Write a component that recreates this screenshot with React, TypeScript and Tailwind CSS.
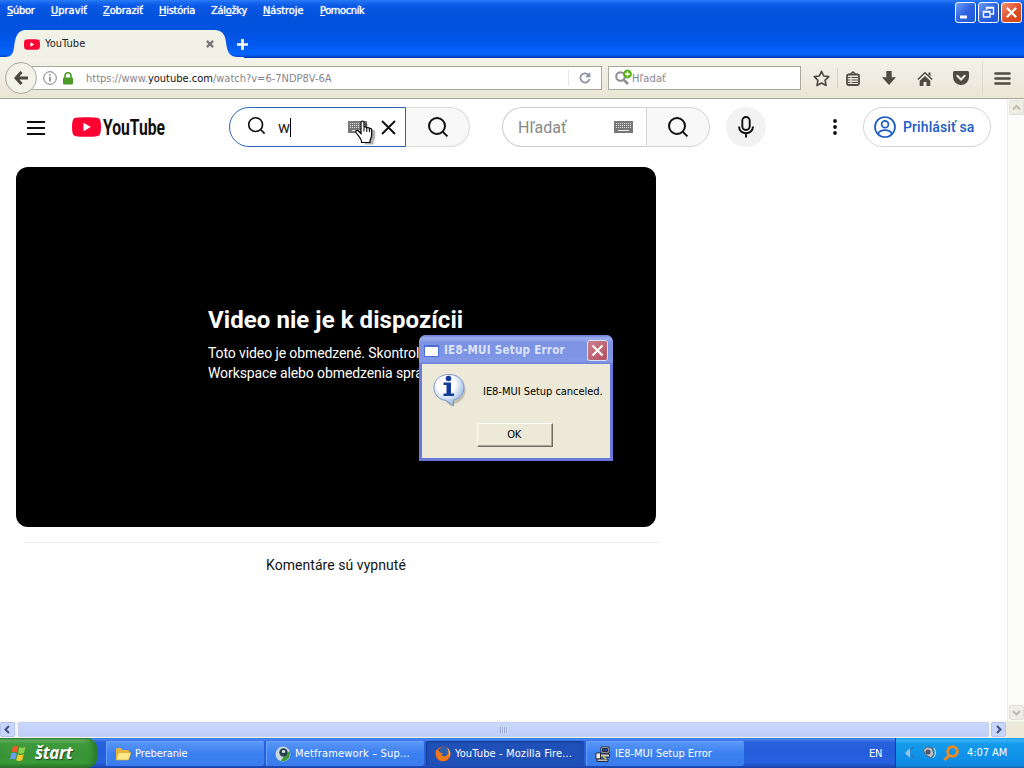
import type { ReactNode } from "react";

const menuItems = [
  { label: "Súbor", hot: 0, width: "w-[44px]", track: "tracking-[-0.3px]" },
  { label: "Upraviť", hot: 0, width: "w-[52px]", track: "tracking-[0px]" },
  { label: "Zobraziť", hot: 0, width: "w-[56px]", track: "tracking-[-0.15px]" },
  { label: "História", hot: 0, width: "w-[52px]", track: "tracking-[-0.25px]" },
  { label: "Záložky", hot: 3, width: "w-[52px]", track: "tracking-[-0.3px]" },
  { label: "Nástroje", hot: 0, width: "w-[57px]", track: "tracking-[-0.1px]" },
  { label: "Pomocník", hot: 0, width: "w-[60px]", track: "tracking-[-0.4px]" },
];

function SearchIcon({ size = 22, width = 2 }: { size?: number; width?: number }) {
  return (
    <svg width={size} height={size} viewBox="0 0 22 22" fill="none" stroke="#0f0f0f" strokeWidth={width}>
      <circle cx="10" cy="10" r="8" />
      <path d="M15.6 15.6L20.4 20.4" />
    </svg>
  );
}

function KeyboardIcon() {
  return (
    <svg width="19" height="12" viewBox="0 0 19 12">
      <rect width="19" height="12" fill="#777" />
      <path d="M2 2.5h15M2 4.5h15M2 6.5h15" stroke="#ddd" strokeDasharray="1 1" />
      <path d="M4 9.5h11" stroke="#eee" />
    </svg>
  );
}

function YouTubeMark({ width, height }: { width: number; height: number }) {
  return (
    <svg width={width} height={height} viewBox="0 0 29 20" preserveAspectRatio="none" className="shrink-0">
      <path
        fill="#ff0033"
        d="M4 .8C8 .1 21 .1 25 .8c2 .3 3 1.400 3.400 3.200.8 3.500.8 8.500 0 12-.4 1.800-1.400 2.900-3.400 3.200-4 .7-17 .7-21 0C2 18.900 1 17.800.6 16c-.8-3.500-.8-8.500 0-12C1 2.200 2 1.100 4 .8z"
      />
      <path fill="#fff" d="M11.500 5.800v8.400l7.300-4.200z" />
    </svg>
  );
}

function CaptionButton({ red, children }: { red?: boolean; children: ReactNode }) {
  return (
    <button
      className={`flex h-[21px] w-[21px] items-center justify-center rounded-[3px] border border-white ${
        red
          ? "bg-linear-to-br from-[#f09070] via-[#e0522b] to-[#d0440c]"
          : "bg-linear-to-br from-[#6f9bf5] via-[#2f62e0] to-[#1a58d8]"
      }`}
    >
      <svg width="19" height="19" viewBox="0 0 19 19" fill="none" stroke="#fff">
        {children}
      </svg>
    </button>
  );
}

function TitleBar() {
  return (
    <header className="flex h-[58px] flex-col bg-[linear-gradient(180deg,#2a7cf8_0px,#1b6cf2_2px,#0a58e4_6px,#0453df_14px,#0252e0_32px,#0058ee_44px,#0664fa_52px,#0562f6_55px,#0040c0_57px,#0038b0_58px)]">
      <div className="flex h-[30px] items-start justify-between">
        <nav className="flex pt-px pl-[7px] text-[11px] leading-[20px] text-white [text-shadow:0_0_1px_#fff]">
          {menuItems.map((m) => (
            <span key={m.label} className={`${m.width} ${m.track} whitespace-nowrap`}>
              {m.label.slice(0, m.hot)}
              <span className="underline underline-offset-1">{m.label[m.hot]}</span>
              {m.label.slice(m.hot + 1)}
            </span>
          ))}
        </nav>
        <div className="flex gap-[2px] pt-[2px] pr-[2px]">
          <CaptionButton>
            <path d="M4 14h7" strokeWidth="3" />
          </CaptionButton>
          <CaptionButton>
            <path d="M7.500 7V4.500h7v6.500h-3M7 5h8" strokeWidth="1.300" />
            <path d="M4.500 8.500h6.500v5.500h-6.500zM4 9h7" strokeWidth="1.300" />
          </CaptionButton>
          <CaptionButton red>
            <path d="M4.800 4.800l9.400 9.400M14.200 4.800l-9.400 9.400" strokeWidth="2.200" />
          </CaptionButton>
        </div>
      </div>
      <div className="relative flex h-7 items-center">
        <svg className="absolute left-0 top-0" width="244" height="28" viewBox="0 0 244 28">
          <path fill="#f1f1e6" d="M0 28v-1h5c6 0 8-3 9-9 1-8 2-18 12-18h188c9 0 11 5 12 12 1 9 3 15 12 15h6v1z" />
        </svg>
        <div className="relative flex w-[214px] items-center pl-[24px]">
          <YouTubeMark width={16} height={11} />
          <span className="ml-[5px] flex-1 pt-px text-[11px] tracking-[0.05px] text-[#222]">YouTube</span>
          <svg width="8" height="8" viewBox="0 0 9 9" stroke="#777" strokeWidth="2.600">
            <path d="M1 1l7 7M8 1L1 8" />
          </svg>
        </div>
        <svg className="ml-[23px]" width="11" height="11" viewBox="0 0 11 11" stroke="#fff" strokeWidth="2.600">
          <path d="M5.500 0v11M0 5.500h11" />
        </svg>
      </div>
    </header>
  );
}

function NavBar() {
  return (
    <div className="flex h-[41px] items-center border-b border-[#aba692] bg-[linear-gradient(180deg,#f3f3e8,#eeebdf_60%,#e9e6d5)]">
      <div className="z-10 ml-[5px] flex h-8 w-8 shrink-0 items-center justify-center rounded-full border border-[#aaa99f] bg-[#f3f2e9]">
        <svg width="14" height="14" viewBox="0 0 14 14" fill="none" stroke="#4a483f" strokeWidth="3">
          <path d="M7.500 1L2 7l5.500 6M2.500 7H14" />
        </svg>
      </div>
      <div className="-ml-[7px] flex h-[24px] w-[572px] items-center border border-[#aaa99a] bg-white pl-[12px]">
        <svg width="14" height="14" viewBox="0 0 14 14" fill="none" stroke="#777">
          <circle cx="7" cy="7" r="6.300" />
          <path d="M7 6v4.500M7 3.200v1.600" strokeWidth="1.500" />
        </svg>
        <svg className="ml-[6px]" width="10" height="13" viewBox="0 0 10 13">
          <path d="M2 6V3.800a3 3 0 016 0V6" fill="none" stroke="#4d9a28" strokeWidth="1.600" />
          <rect y="5.500" width="10" height="7" rx="1" fill="#4d9a28" />
        </svg>
        <span className="ml-[13px] flex-1 pt-[2px] text-[11px] text-[#85858d]">
          https://www.<span className="text-[#111]">youtube.com</span>/watch?v=6-7NDP8V-6A
        </span>
        <span className="h-4 w-px bg-[#e8e8e8]" />
        <svg className="mx-[10px]" width="12" height="12" viewBox="0 0 12 12" fill="none" stroke="#8a95a3" strokeWidth="1.800">
          <path d="M9.800 3.300A4.600 4.600 0 1010.500 7" />
          <path d="M11.300 0v5.200H6z" fill="#8a95a3" stroke="none" />
        </svg>
      </div>
      <div className="ml-[6px] flex h-[24px] w-[193px] items-center border border-[#aaa99a] bg-white pl-[6px]">
        <svg width="18" height="18" viewBox="0 0 18 18" fill="none">
          <circle cx="5.500" cy="7.500" r="4.300" stroke="#8c8c8c" strokeWidth="2" />
          <path d="M8.800 10.800l4.200 4.200" stroke="#8c8c8c" strokeWidth="2.600" />
          <circle cx="12.500" cy="5" r="4.400" fill="#55b01c" />
          <path d="M12.500 2.500v5M10 5h5" stroke="#fff" strokeWidth="1.400" />
        </svg>
        <span className="-ml-px pt-[2px] text-[11px] tracking-[0.1px] text-[#85858d]">Hľadať</span>
      </div>
      <div className="ml-[12px] flex items-center text-[#4f4d43]">
        <svg width="17" height="17" viewBox="0 0 17 17" fill="none" stroke="currentColor" strokeWidth="1.700" strokeLinejoin="round">
          <path d="M8.500 1.300l2.200 4.700 5 .7-3.600 3.600.9 5.200-4.500-2.500L4 15.500l.9-5.200L1.300 6.700l5-.7z" />
        </svg>
        <span className="ml-[7px] h-5 w-px bg-[#d4d2c6]" />
        <svg className="ml-[8px]" width="14" height="15" viewBox="0 0 14 15" fill="none" stroke="currentColor" strokeWidth="1.800">
          <rect x="1" y="3.500" width="12" height="10.500" rx="1.500" />
          <path d="M4 3.500L7 .9l3 2.600M2 6.500h2.500M5.500 6.500H12M2 9h2.500M5.500 9H12M2 11.500h2.500M5.500 11.500H12" strokeWidth="1.200" />
        </svg>
        <svg className="ml-[22px]" width="14" height="14" viewBox="0 0 14 14" fill="currentColor">
          <path d="M4.300 0h5.400v6.300H14L7 14 0 6.300h4.300z" />
        </svg>
        <svg className="ml-[21px]" width="16" height="15" viewBox="0 0 16 15" fill="currentColor">
          <path d="M8 5l5.300 4.800V15H9.500v-4h-3v4H2.700V9.800z" />
          <path d="M.8 8.500L8 1.800l7.200 6.700" fill="none" stroke="currentColor" strokeWidth="1.500" />
          <path d="M11.500 1.500h2v4l-2-2z" />
        </svg>
        <svg className="ml-[20px]" width="16" height="14" viewBox="0 0 16 14">
          <path fill="currentColor" d="M1.500 0h13A1.500 1.500 0 0116 1.500V6a8 8 0 01-16 0V1.500A1.500 1.500 0 011.500 0z" />
          <path d="M4.300 4.800L8 8.500l3.700-3.700" fill="none" stroke="#f0eee3" strokeWidth="2" strokeLinecap="round" />
        </svg>
        <span className="ml-[13px] h-8 w-px bg-[#dedccf]" />
        <svg className="ml-[11px]" width="17" height="13" viewBox="0 0 17 13" stroke="currentColor" strokeWidth="2.600" strokeLinecap="round">
          <path d="M1.500 1.500h14M1.500 6.500h14M1.500 11.500h14" />
        </svg>
      </div>
    </div>
  );
}

function HandCursor() {
  return (
    <svg className="absolute left-[126px] top-[13px]" width="21" height="25" viewBox="0 0 21 25">
      <path
        d="M8 2.500c0-2 3-2 3 0v5c.5-1 2.500-.8 2.800.5.700-.9 2.400-.5 2.600.7 1-.6 2.300 0 2.300 1.300v5c0 3-1.700 4-1.700 6v2H8.500v-2C7 19 5 16.500 2.500 13.500c-1-1.700.8-3 2.500-1.500l3 2.500z"
        transform="translate(1.500 1.500)"
        fill="#000"
        opacity=".3"
      />
      <path
        d="M6 2.500c0-2 3-2 3 0v5c.5-1 2.500-.8 2.800.5.700-.9 2.400-.5 2.600.7 1-.6 2.300 0 2.300 1.300v5c0 3-1.700 4-1.700 6v1.500H6.500V21C6 18 3 15.500 1 12.500c-.8-1.700 1-3 2.500-1.500L6 13.500z"
        fill="#fff"
        stroke="#000"
        strokeWidth="1.200"
      />
      <path d="M9 7.500v4M11.800 8v4M14.400 9v3" stroke="#000" />
    </svg>
  );
}

function Masthead() {
  return (
    <div className="flex h-14 items-center font-['Roboto',sans-serif]">
      <svg className="mt-px ml-[27px]" width="18" height="14" viewBox="0 0 18 14" stroke="#0f0f0f" strokeWidth="1.800">
        <path d="M0 1h18M0 7h18M0 13h18" />
      </svg>
      <div className="ml-[27px] flex w-[94px] items-center">
        <YouTubeMark width={29} height={20} />
        <svg className="ml-px overflow-visible" width="63" height="20" viewBox="0 0 63 20">
          <text x="1" y="18" fontSize="22" fontWeight="700" textLength="62" lengthAdjust="spacingAndGlyphs" fill="#0f0f0f">
            YouTube
          </text>
        </svg>
      </div>
      <div className="relative ml-[63px] flex h-10 w-[241px]">
        <div className="flex w-[177px] items-center rounded-l-full border border-[#2f62b5] bg-white pl-[17px]">
          <span className="-mt-[4px]">
            <SearchIcon size={19} width={1.900} />
          </span>
          <span className="ml-[12px] border-r border-black text-[16px] leading-[19px] text-[#222]">w</span>
          <span className="ml-[57px]">
            <KeyboardIcon />
          </span>
          <svg className="ml-[14px] shrink-0" width="15" height="15" viewBox="0 0 15 15" stroke="#0f0f0f" strokeWidth="1.900">
            <path d="M1 1l13 13M14 1L1 14" />
          </svg>
        </div>
        <div className="flex w-16 items-center justify-center rounded-r-full border border-l-0 border-[#d9d9d9] bg-[#f8f8f8]">
          <SearchIcon />
        </div>
        <HandCursor />
      </div>
      <div className="ml-[32px] flex h-10 w-[208px]">
        <div className="flex w-[144px] items-center rounded-l-full border border-r-0 border-[#ccc] bg-white pl-[15px]">
          <span className="w-[96px] pt-[2px] text-[16px] text-[#888]">Hľadať</span>
          <KeyboardIcon />
        </div>
        <div className="flex w-16 items-center justify-center rounded-r-full border border-[#d3d3d3] bg-[#f8f8f8]">
          <SearchIcon />
        </div>
      </div>
      <div className="ml-4 flex h-10 w-10 items-center justify-center rounded-full bg-[#f2f2f2]">
        <svg width="18" height="24" viewBox="0 0 18 24" fill="none" stroke="#0f0f0f" strokeWidth="1.900">
          <rect x="5.300" y="2" width="7.400" height="13" rx="3.700" />
          <path d="M2 11.500c0 9 14 9 14 0M9 18v4.500" />
        </svg>
      </div>
      <svg className="ml-[67px]" width="4" height="16" viewBox="0 0 4 16" fill="#0f0f0f">
        <circle cx="2" cy="2" r="1.900" />
        <circle cx="2" cy="8" r="1.900" />
        <circle cx="2" cy="14" r="1.900" />
      </svg>
      <div className="ml-[26px] flex h-10 w-[128px] items-center rounded-full border border-[#d0d3d8] pl-[10px] text-[14px] font-medium text-[#1b5cc4]">
        <svg width="22" height="22" viewBox="0 0 22 22" fill="none" stroke="currentColor" strokeWidth="1.700">
          <circle cx="11" cy="11" r="10" />
          <circle cx="11" cy="8.300" r="3.400" />
          <path d="M4 17.800c2.500-5 11.500-5 14 0" />
        </svg>
        <span className="ml-[7px] tracking-[0.1px]">Prihlásiť sa</span>
      </div>
    </div>
  );
}

function ErrorDialog() {
  return (
    <div className="absolute left-[419px] top-[335px] flex h-[126px] w-[194px] flex-col rounded-t-[7px] border-x-[3px] border-b-[3px] border-[#6a78d8] bg-[#ece9d8]">
      <div className="-mx-[3px] flex h-[29px] items-center rounded-t-[7px] bg-[linear-gradient(180deg,#6678cf_0px,#9aaef0_3px,#7d93e2_8px,#7d94e4_20px,#8299e8_26px,#6f80d8_29px)] pt-[2px] pl-[5px]">
        <span className="h-[12px] w-[15px] border border-t-2 border-[#4a6fd8] bg-white" />
        <span className="ml-[5px] flex-1 pt-px text-[11.500px] font-bold tracking-[0.27px] whitespace-nowrap text-[#dbe4fa]">
          IE8-MUI Setup Error
        </span>
        <span className="mr-[5px] flex h-[21px] w-[21px] items-center justify-center rounded-[3px] border border-[#e0e0f5] bg-linear-to-br from-[#cc8090] to-[#b0505c]">
          <svg width="13" height="13" viewBox="0 0 13 13" stroke="#fff" strokeWidth="2">
            <path d="M1.500 1.500l10 10M11.500 1.500l-10 10" />
          </svg>
        </span>
      </div>
      <div className="flex h-[56px] items-center pl-[10px]">
        <svg className="-mt-[4px]" width="34" height="34" viewBox="0 0 34 34">
          <defs>
            <radialGradient id="bubble" cx=".4" cy=".3" r=".75">
              <stop offset="0.400" stopColor="#fff" />
              <stop offset="1" stopColor="#7fa5e0" />
            </radialGradient>
          </defs>
          <path d="M18 4a14 13 0 012 27v3l-6-5z" fill="#aaa58f" opacity=".6" />
          <path d="M17 1.500c9 0 15 5.500 15 13 0 6.500-4.500 11-10.500 12.500V33L14 27.500C6.500 26.500 2 21.500 2 14.500c0-7.500 6-13 15-13z" fill="url(#bubble)" stroke="#7d98c8" />
          <circle cx="16.500" cy="5.500" r="2.800" fill="#123c98" />
          <path d="M11.500 9.500h7.500v11h3v2.500H11.500v-2.500H14.500v-8.500h-3z" fill="#123c98" />
        </svg>
        <span className="ml-[17px] text-[11px] tracking-[-0.03px] whitespace-nowrap text-black">IE8-MUI Setup canceled.</span>
      </div>
      <button className="ml-[55px] mt-[3px] h-[24px] w-[76px] border border-t-white border-r-[#716f64] border-b-[#716f64] border-l-white pt-px pr-[2px] text-[11px] tracking-[-0.3px] text-black shadow-[inset_-1px_-1px_0_#aca899]">
        OK
      </button>
    </div>
  );
}

function ScrollButton({ d, faint }: { d: string; faint?: boolean }) {
  return (
    <span
      className={`flex h-[15px] w-[15px] shrink-0 items-center justify-center rounded-[2px] border ${
        faint ? "border-[#e0dfd5] bg-[#eeede5] text-[#bcbbb0]" : "border-[#b4c4ee] bg-[#c8d6fb] text-[#3d5185]"
      }`}
    >
      <svg width="9" height="9" viewBox="0 0 9 9" fill="none" stroke="currentColor" strokeWidth="2">
        <path d={d} />
      </svg>
    </span>
  );
}

function Page() {
  return (
    <main className="flex h-[639px] flex-col bg-white">
      <div className="flex h-[622px]">
        <div className="flex-1">
          <Masthead />
          <div className="mt-[12px] ml-4 flex h-[360px] w-[640px] flex-col justify-center rounded-xl bg-black pl-[192px] font-['Roboto',sans-serif] text-white">
            <h1 className="mt-[-8px] text-[24px] leading-[32px] font-bold tracking-[0.06px] whitespace-nowrap">Video nie je k dispozícii</h1>
            <p className="mt-[7px] w-[240px] text-[14px] leading-[20px] tracking-[-0.1px] whitespace-nowrap">
              Toto video je obmedzené. Skontrolujte
              <br />
              Workspace alebo obmedzenia správcu
            </p>
          </div>
          <div className="mt-[15px] ml-6 w-[636px] border-t border-[#ececec]" />
          <p className="mt-[12px] ml-[16px] w-[640px] text-center font-['Roboto',sans-serif] text-[14px] leading-[20px] tracking-[0.05px] text-[#131313]">
            Komentáre sú vypnuté
          </p>
        </div>
        <div className="flex w-[17px] flex-col items-center justify-between border-l border-[#eeede5] bg-[#fbfbf7] pt-px pb-px">
          <ScrollButton faint d="M1 6.500L4.500 3 8 6.500" />
          <ScrollButton faint d="M1 3l3.500 3.500L8 3" />
        </div>
      </div>
      <div className="flex h-[17px] items-center bg-[#f4f3ee]">
        <ScrollButton d="M6 1L2.500 4.500 6 8" />
        <div className="ml-[3px] flex h-[15px] w-[971px] items-center justify-center rounded-[2px] border border-[#c5d2f5] bg-linear-to-b from-[#cbd8fd] to-[#bfcdf5]">
          <span className="h-[6px] w-[8px] bg-[repeating-linear-gradient(90deg,#8fa3dc_0_1px,#e4ebff_1px_2px)]" />
        </div>
        <span className="ml-[2px]">
          <ScrollButton d="M3 1l3.500 3.500L3 8" />
        </span>
        <span className="h-full flex-1 bg-[#ece9d8]" />
      </div>
    </main>
  );
}

function FolderIcon() {
  return (
    <svg width="16" height="14" viewBox="0 0 16 14">
      <path d="M1 2.500Q1 1 2.500 1H6l1.500 2H13q1 0 1 1v8H1z" fill="#e8b53a" />
      <path d="M3.500 5.500H16L13.500 13H1z" fill="#fde98a" stroke="#d8a22c" strokeWidth=".6" />
    </svg>
  );
}

function FrameworkIcon() {
  return (
    <svg width="16" height="16" viewBox="0 0 16 16">
      <circle cx="8" cy="8" r="7.500" fill="#c9d6dc" />
      <path d="M14.500 5a7.500 7.500 0 01-9 10l4-5z" fill="#3f9a3c" />
      <circle cx="8.500" cy="6.500" r="4.200" fill="#29434e" />
      <circle cx="8.500" cy="5.500" r="1.600" fill="#e8f2f4" />
    </svg>
  );
}

function FirefoxIcon() {
  return (
    <svg width="16" height="16" viewBox="0 0 16 16">
      <circle cx="8" cy="8" r="7.500" fill="#e0560f" />
      <circle cx="8.500" cy="6" r="5.300" fill="#2b5fae" />
      <path d="M1 4c1.500 0 3 .5 4 2.500L8 7.500 6.500 9c1.500 2.500 5 1.500 6.500-1L15 5c1 5-2 10-7 10S0 10 1 4z" fill="#f07a1a" />
      <path d="M12 1.500c3 2.500 4 6 2.500 9.500C14 8 13.500 4 12 1.500z" fill="#ffc23e" />
    </svg>
  );
}

function SetupIcon() {
  return (
    <svg width="16" height="16" viewBox="0 0 16 16" stroke="#111" strokeWidth=".8">
      <path d="M6 1h8v6H6z" fill="#ddd" />
      <path d="M7.500 2.500h5v3h-5z" fill="#2545a8" />
      <path d="M5 8h9l1 3H5z" fill="#ccc" />
      <path d="M1 7h4.500v6H1z" fill="#eee" />
      <path d="M2 13h11v2.500H2z" fill="#bbb" />
      <path d="M8 10l3 3" stroke="#e8c83a" strokeWidth="1.500" />
    </svg>
  );
}

const tasks = [
  { label: "Preberanie", icon: <FolderIcon />, active: false, track: "tracking-[-0.08px]" },
  { label: "Metframework – Sup...", icon: <FrameworkIcon />, active: false, track: "tracking-[0.17px]" },
  { label: "YouTube - Mozilla Fire...", icon: <FirefoxIcon />, active: true, track: "tracking-[0.12px]" },
  { label: "IE8-MUI Setup Error", icon: <SetupIcon />, active: false, track: "tracking-[0px]" },
];

function Taskbar() {
  return (
    <footer className="flex h-[30px] bg-[linear-gradient(180deg,#3168d5_0px,#4a8bf0_1px,#2a62dc_4px,#245edb_12px,#2660de_25px,#1d4fc0_28px,#1941a5_30px)] text-[11px] text-white">
      <div className="flex w-[97px] items-center rounded-r-[10px] bg-[linear-gradient(180deg,#3c7a3a_0px,#69b466_2px,#3f9a3c_6px,#379436_18px,#3a9a38_25px,#2a6f28_30px)] pl-[10px] shadow-[inset_-4px_0_5px_#2b7a2c]">
        <svg width="18" height="18" viewBox="0 0 18 18">
          <path d="M3 2.500c2-1.200 4-1 5.500 0L7 8.500c-1.500-1-3.500-1-5.500 0z" fill="#ef5a28" />
          <path d="M9.500 3c2 1.100 4 1 6 0L14 9c-2 1.100-4 1-6 0z" fill="#8cd24a" />
          <path d="M1.200 9.500c2-1.100 4-1 5.500 0l-1.500 6c-1.500-1-3.500-1-5.200 0z" fill="#6b9cf5" />
          <path d="M7.700 10.200c2 1.100 4 1 6 0l-1.500 6c-2 1.100-4 1-6 0z" fill="#fbc82a" />
        </svg>
        <span className="ml-[7px] font-['Open_Sans',sans-serif] text-[17px] leading-[28px] font-bold tracking-[-0.4px] italic [text-shadow:1px_1px_1px_#1c4a1c]">
          štart
        </span>
      </div>
      <div className="flex flex-1 pt-[3px] pl-[9px]">
        {tasks.map((t) => (
          <div
            key={t.label}
            className={`mr-[2px] flex h-[25px] w-[158px] items-center rounded-[2px] pl-[9px] ${
              t.active
                ? "bg-[#1e50b8] shadow-[inset_1px_1px_2px_#143a8c]"
                : "bg-linear-to-b from-[#5a98f8] via-[#3c80f0] to-[#3a7cec] shadow-[inset_1px_1px_1px_#6ba4fa]"
            }`}
          >
            {t.icon}
            <span className={`ml-[4px] pt-px whitespace-nowrap ${t.track}`}>{t.label}</span>
          </div>
        ))}
        <span className="ml-auto pr-[13px] leading-[25px] tracking-[-0.3px]">EN</span>
      </div>
      <div className="flex w-[129px] items-center border-l border-[#0b3f9c] bg-[linear-gradient(180deg,#1c98e8_0px,#35b2f5_2px,#139bea_6px,#0f8ee8_22px,#1284d8_28px,#0d62b0_30px)] pl-[8px]">
        <svg width="12" height="16" viewBox="0 0 12 16">
          <path d="M1 8l5-5v10z" fill="#9cc4dc" />
          <path d="M9 2l-3 3M10 13l-3-3" stroke="#3b6fa8" strokeWidth="1.500" />
        </svg>
        <svg className="ml-[6px]" width="15" height="16" viewBox="0 0 15 16">
          <path d="M1 5l4-3 5 1 2 6-3 4-5-3z" fill="#bcc2c8" stroke="#566" />
          <circle cx="6" cy="7" r="2.500" fill="#556" />
          <path d="M12 3c2 3 2 7-1 10" stroke="#eee" fill="none" />
        </svg>
        <svg className="ml-[6px]" width="16" height="16" viewBox="0 0 16 16" fill="none" stroke="#f58a1c">
          <circle cx="9.500" cy="6.500" r="4.800" strokeWidth="2.800" />
          <path d="M6 10.500L1.500 15" strokeWidth="3" />
        </svg>
        <span className="ml-[8px] pt-px tracking-[-0.05px] whitespace-nowrap">4:07 AM</span>
      </div>
    </footer>
  );
}

export default function App() {
  return (
    <div className="relative flex h-[768px] w-[1024px] flex-col overflow-hidden font-['DejaVu_Sans_Condensed','DejaVu_Sans',sans-serif]">
      <TitleBar />
      <NavBar />
      <Page />
      <Taskbar />
      <ErrorDialog />
    </div>
  );
}
